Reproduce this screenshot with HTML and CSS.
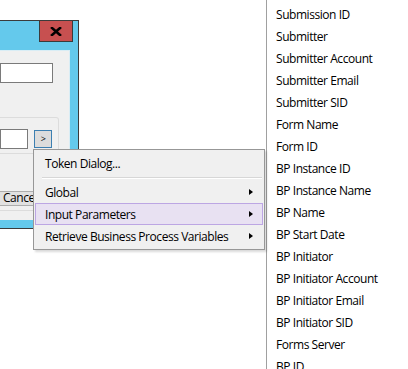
FILE: index.html
```html
<!DOCTYPE html>
<html lang="en">
<head>
  <meta charset="UTF-8">
  <title>Token Menu</title>
  <link rel="stylesheet" href="styles.css">
</head>
<body>
  <div class="desk">
    <!-- Dialog window (mostly off screen) -->
    <div class="dialog">
      <div class="titlebar">
        <div class="close-btn">
          <svg width="12" height="9" viewBox="0 0 12 9">
            <path d="M2 1 L10 8 M10 1 L2 8" stroke="#000" stroke-width="2.6" stroke-linecap="square"/>
          </svg>
        </div>
      </div>
      <div class="client">
        <div class="textbox wide"></div>
        <div class="groupbox">
          <div class="row">
            <div class="textbox narrow"></div>
            <div class="small-btn">&gt;</div>
          </div>
        </div>
        <div class="btn-cancel">Cancel</div>
        <div class="bottom-line"></div>
      </div>
    </div>

    <!-- Context menu -->
    <div class="menu">
      <div class="menu-item">Token Dialog...</div>
      <div class="menu-sep"></div>
      <div class="menu-item">Global <span class="arrow"></span></div>
      <div class="menu-item active">Input Parameters <span class="arrow"></span></div>
      <div class="menu-item">Retrieve Business Process Variables <span class="arrow"></span></div>
    </div>
  </div>

  <!-- Submenu list -->
  <div class="submenu">
    <div class="sub-item">Submission ID</div>
    <div class="sub-item">Submitter</div>
    <div class="sub-item">Submitter Account</div>
    <div class="sub-item">Submitter Email</div>
    <div class="sub-item">Submitter SID</div>
    <div class="sub-item">Form Name</div>
    <div class="sub-item">Form ID</div>
    <div class="sub-item">BP Instance ID</div>
    <div class="sub-item">BP Instance Name</div>
    <div class="sub-item">BP Name</div>
    <div class="sub-item">BP Start Date</div>
    <div class="sub-item">BP Initiator</div>
    <div class="sub-item">BP Initiator Account</div>
    <div class="sub-item">BP Initiator Email</div>
    <div class="sub-item">BP Initiator SID</div>
    <div class="sub-item">Forms Server</div>
    <div class="sub-item">BP ID</div>
  </div>
</body>
</html>
```

FILE: styles.css
```css
body {
  margin: 0;
  padding: 0;
  font-family: "Open Sans", "Noto Sans", sans-serif;
  font-size: 12px;
  letter-spacing: -0.45px;
  color: #000;
  background: #fff;
  display: flex;
  height: 369px;
  overflow: hidden;
}

.desk {
  position: relative;
  width: 266px;
  flex: none;
}

/* Dialog */
.dialog {
  position: absolute;
  left: 0;
  top: 20px;
  width: 78px;
  height: 207px;
  background: #64c9ec;
  border: 1px solid #3b3b3b;
  border-left: none;
  display: flex;
  flex-direction: column;
}

.titlebar {
  height: 29px;
  position: relative;
  flex: none;
}

.close-btn {
  position: absolute;
  top: -1px;
  right: 5px;
  width: 32px;
  height: 20px;
  background: #c75050;
  border: 1px solid #3b3b3b;
  display: flex;
  align-items: center;
  justify-content: center;
}

.client {
  width: 70px;
  height: 170px;
  background: #f0f0f0;
  border-top: 1px solid #d9edf5;
  border-right: 1px solid #d9edf5;
  box-sizing: border-box;
  position: relative;
  display: flex;
  flex-direction: column;
}

.textbox {
  background: #fff;
  border: 1px solid #7a7a7a;
  box-sizing: border-box;
  height: 20px;
}

.textbox.wide {
  width: 53px;
  margin-top: 12px;
}

.groupbox {
  margin-top: 34px;
  width: 59px;
  height: 37px;
  border: 1px solid #dcdcdc;
  border-left: none;
  border-radius: 0 3px 3px 0;
  box-sizing: border-box;
}

.row {
  display: flex;
  align-items: flex-start;
  margin-top: 11px;
}

.textbox.narrow {
  width: 28px;
}

.small-btn {
  margin-left: 6px;
  margin-top: 1px;
  width: 18px;
  height: 18px;
  box-sizing: border-box;
  border: 1px solid #3c7fb1;
  background: #dcdcdc;
  font-size: 9px;
  line-height: 15px;
  text-align: center;
}

.btn-cancel {
  margin-top: 37px;
  width: 40px;
  height: 15px;
  box-sizing: border-box;
  border: 1px solid #adadad;
  border-left: none;
  background: #e1e1e1;
  padding-left: 3px;
  line-height: 12px;
}

.bottom-line {
  margin-top: 4px;
  height: 1px;
  width: 70px;
  background: #dcdcdc;
}

/* Context menu */
.menu {
  position: absolute;
  left: 33px;
  top: 149px;
  width: 232px;
  box-sizing: border-box;
  background: #f0f0f0;
  border: 1px solid #979797;
  padding: 2px 1px;
  box-shadow: 2px 2px 2px rgba(0, 0, 0, 0.15);
}

.menu-item {
  height: 22px;
  padding-left: 9px;
  position: relative;
  box-sizing: border-box;
  border: 1px solid transparent;
  line-height: 21px;
}

.menu-item.active {
  background: #e8e1f2;
  border-color: #bca6e3;
}

.arrow {
  position: absolute;
  right: 9px;
  top: 7px;
  width: 0;
  height: 0;
  border-top: 3.5px solid transparent;
  border-bottom: 3.5px solid transparent;
  border-left: 4px solid #000;
}

.menu-sep {
  height: 1px;
  margin: 3px 1px 2px 7px;
  background: #d7d7d7;
  border-bottom: 1px solid #fff;
}

/* Submenu */
.submenu {
  flex: 1;
  border-left: 1px solid #a0a0a0;
  padding-top: 4px;
  padding-left: 9px;
}

.sub-item {
  height: 22px;
  line-height: 22px;
  white-space: nowrap;
}
```
